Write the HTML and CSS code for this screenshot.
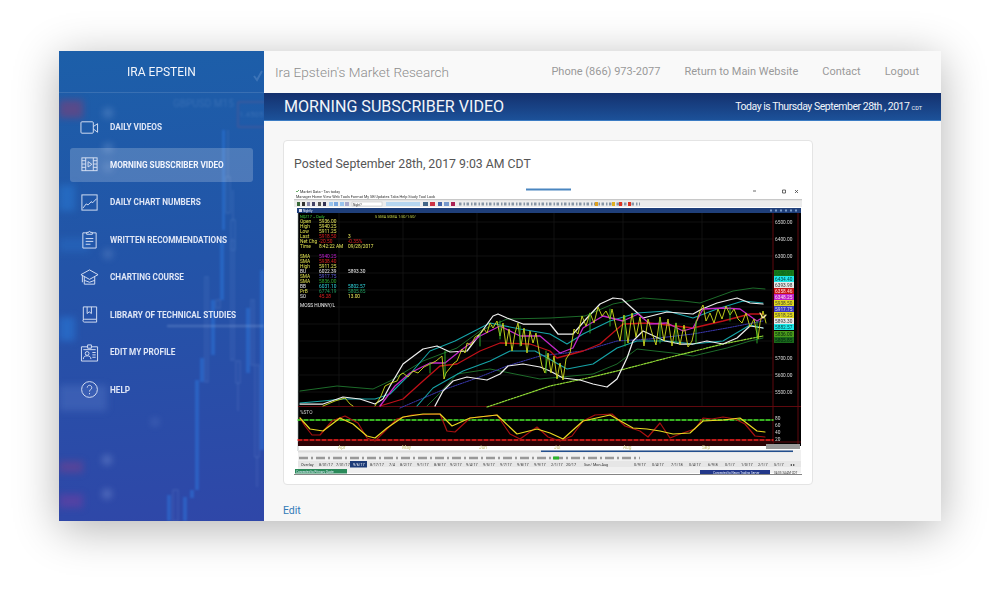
FILE: index.html
```html
<!DOCTYPE html>
<html lang="en">
<head>
<meta charset="utf-8">
<title>Morning Subscriber Video</title>
<link rel="stylesheet" href="styles.css">
</head>
<body>
<div class="window">
  <aside class="sidebar">
    <svg class="side-art" viewBox="59 51 205 470" aria-hidden="true">
      <g class="art-blur">
        <rect x="59" y="100" width="24" height="18" fill="#b0305c" opacity=".4"/>
        <rect x="59" y="461" width="24" height="12" fill="#a03a80" opacity=".35"/>
        <rect x="59" y="494" width="24" height="14" fill="#8a3aa0" opacity=".4"/>
        <rect x="59" y="185" width="16" height="26" fill="#2a7cd8" opacity=".5"/>
        <rect x="59" y="317" width="16" height="24" fill="#2a80e0" opacity=".5"/>
        <rect x="59" y="385" width="48" height="26" fill="#7a9ce0" opacity=".22"/>
        <rect x="59" y="238" width="30" height="14" fill="#2a7cd8" opacity=".3"/>
        <circle cx="108" cy="113" r="5" fill="#9ab8e8" opacity=".3"/>
        <circle cx="108" cy="148" r="5" fill="#9ab8e8" opacity=".3"/>
        <circle cx="108" cy="167" r="5" fill="#9ab8e8" opacity=".25"/>
        <circle cx="108" cy="254" r="5" fill="#9ab8e8" opacity=".25"/>
        <circle cx="107" cy="460" r="5" fill="#a8c0ee" opacity=".3"/>
        <circle cx="107" cy="494" r="5" fill="#a8c0ee" opacity=".3"/>
        <circle cx="155" cy="422" r="4" fill="#a8c0ee" opacity=".18"/>
      </g>
      <text x="173" y="107" class="art-text">GBPUSD M15</text>
      <rect x="238" y="102" width="30" height="25" class="art-box"/>
      <text x="239" y="117" class="art-num">1.4505</text>
      <path d="M254 76l3 4 5-9" class="art-tick"/>
      <g class="art-soft">
        <g fill="#2f7fe6" opacity=".42">
          <rect x="195" y="380" width="4" height="110"/>
          <rect x="200" y="358" width="4" height="24"/>
          <rect x="211" y="300" width="4" height="55"/>
          <rect x="220" y="240" width="4" height="60"/>
          <rect x="222" y="130" width="3" height="100"/>
          <rect x="246" y="308" width="4" height="65"/>
          <rect x="260" y="270" width="4" height="180"/>
          <rect x="167" y="495" width="4" height="26"/>
          <rect x="183" y="497" width="4" height="24"/>
          <rect x="190" y="490" width="4" height="8"/>
        </g>
        <g fill="none" stroke="#8fb2e8" stroke-width="1" opacity=".24">
          <rect x="216" y="300" width="4" height="8"/>
          <rect x="231" y="240" width="3" height="120"/>
          <rect x="236" y="361" width="4" height="22"/>
          <rect x="251" y="300" width="3" height="65"/>
          <rect x="255" y="365" width="4" height="92"/>
          <rect x="205" y="277" width="3" height="105"/>
          <rect x="173" y="490" width="5" height="31"/>
          <rect x="226" y="177" width="4" height="36"/>
          <rect x="231" y="220" width="4" height="30"/>
          <path d="M238 383v28M257 457v30M233 190v30M228 130v47"/>
        </g>
        <path d="M167 326H264" stroke="#a9c3ee" stroke-width="2" opacity=".28"/>
      </g>
    </svg>
    <div class="brand">IRA EPSTEIN</div>
    <nav>
      <ul class="menu">
        <li class="menu-item">
          <a href="#" class="menu-link">
            <svg class="icon" viewBox="0 0 20 20"><rect x="1" y="4" width="13" height="12" rx="1"/><path d="M14 9l4.500-3v9L14 11.500"/></svg>
            <span>Daily Videos</span>
          </a>
        </li>
        <li class="menu-item">
          <a href="#" class="menu-link is-active">
            <svg class="icon" viewBox="0 0 20 20"><rect x="2" y="3" width="16" height="13.500"/><path d="M6 3v13.500M14 3v13.500M2 6h4M2 9.500h4M2 13h4M14 6h4M14 9.500h4M14 13h4M8.500 7l4 2.800-4 2.800z"/></svg>
            <span>Morning Subscriber Video</span>
          </a>
        </li>
        <li class="menu-item">
          <a href="#" class="menu-link">
            <svg class="icon" viewBox="0 0 20 20"><rect x="2" y="2" width="16" height="16"/><path d="M3 16l3.500-4.500 2 1 3.500-3.500 1 1.500L17.500 6"/></svg>
            <span>Daily Chart Numbers</span>
          </a>
        </li>
        <li class="menu-item">
          <a href="#" class="menu-link">
            <svg class="icon" viewBox="0 0 20 20"><path d="M7 3H3v16h14V3h-4M7 4.500V2.500h2a1 1 0 0 1 2 0h2v2zM6 9h8M6 12h8M6 15h5"/></svg>
            <span>Written Recommendations</span>
          </a>
        </li>
        <li class="menu-item">
          <a href="#" class="menu-link">
            <svg class="icon" viewBox="0 0 20 20"><path d="M10 2L1 7l9 5 9-5zM4.500 9v8h11V9M2.500 8v7M4.500 13l5.500 2 5.500-2"/></svg>
            <span>Charting Course</span>
          </a>
        </li>
        <li class="menu-item">
          <a href="#" class="menu-link">
            <svg class="icon" viewBox="0 0 20 20"><path d="M3.500 2h14v13h-13a1.500 1.500 0 0 0-1 2.500 1.500 1.500 0 0 0 1 .5h13v-3M3.500 2v14M7.500 2v7l2.200-1.800L12 9V2"/></svg>
            <span>Library of Technical Studies</span>
          </a>
        </li>
        <li class="menu-item">
          <a href="#" class="menu-link">
            <svg class="icon" viewBox="0 0 20 20"><path d="M8 4H1.500v15h17V4H12M8 5.500V2h4v3.500zM3.500 7h13"/><circle cx="7.500" cy="11" r="2"/><path d="M3.500 17c0-2.500 1.500-3.500 4-3.500s4 1 4 3.500M13 10h3.500M13 12.500h3.500M13 15h3.500"/></svg>
            <span>Edit My Profile</span>
          </a>
        </li>
        <li class="menu-item">
          <a href="#" class="menu-link">
            <svg class="icon" viewBox="0 0 20 20"><circle cx="10" cy="10" r="8.300"/><path d="M7.600 8a2.400 2.400 0 1 1 3.600 2.100c-.9.500-1.200 1-1.200 2M10 13.700v1.300"/></svg>
            <span>Help</span>
          </a>
        </li>
      </ul>
    </nav>
  </aside>

  <div class="main">
    <header class="topbar">
      <div class="site-title">Ira Epstein's Market Research</div>
      <div class="top-links">
        <a href="#">Phone (866) 973-2077</a>
        <a href="#">Return to Main Website</a>
        <a href="#">Contact</a>
        <a href="#">Logout</a>
      </div>
    </header>
    <div class="pagebar">
      <h1>MORNING SUBSCRIBER VIDEO</h1>
      <div class="today">Today is Thursday September 28th , 2017 <small>CDT</small></div>
    </div>
    <section class="content">
      <article class="card">
        <h2>Posted September 28th, 2017 9:03 AM CDT</h2>
        <svg class="chart" viewBox="294 182 508 292" role="img" aria-label="Chart screenshot">
          <rect x="294" y="182" width="508" height="292" fill="#fff"/>
          <rect x="526" y="187.500" width="45" height="2" fill="#4a86c0"/>
          <path d="M296 190l1 1 2-2" stroke="#2a8a2a" fill="none" stroke-width=".7"/>
          <text x="300" y="191.500" class="t4 dk">Market Data - Tan today</text>
          <text x="296" y="197" class="t4 dk">Manager  Home  View  Web  Tools  Format  My SB Updates  Tabs  Help  Study  Tool  Look</text>
          <path d="M753 190h3M782.500 189h3v3h-3zM795 192l3-3M795 189l3 3" stroke="#444" stroke-width=".8" fill="none"/>
          <rect x="294" y="198" width="508" height="1.500" fill="#c8c8c8"/>
          <rect x="294" y="200" width="508" height="6" fill="#ececec"/>
          <g class="tools">
            <rect x="297" y="201" width="3" height="4" fill="#3a6a3a"/><rect x="302" y="201" width="3" height="4" fill="#333"/><rect x="307" y="201" width="3" height="4" fill="#88a"/><rect x="312" y="201" width="3" height="4" fill="#446"/><rect x="318" y="201" width="3" height="4" fill="#555"/><rect x="323" y="201" width="3" height="4" fill="#335"/>
            <rect x="329" y="201" width="4" height="4" fill="#9ac4ee"/><rect x="334" y="201" width="4" height="4" fill="#7aa8e0"/><rect x="340" y="201" width="4" height="4" fill="#9ac4ee"/><rect x="345" y="201" width="4" height="4" fill="#aac"/>
            <rect x="352" y="201" width="30" height="4" fill="#fff" stroke="#aaa" stroke-width=".4"/>
            <text x="353" y="204.500" class="t3 dk">Night?</text>
            <rect x="386" y="201" width="34" height="4" fill="#b6d6f0"/><rect x="423" y="201" width="5" height="4" fill="#446688"/><rect x="430" y="201" width="5" height="4" fill="#cc3344"/><rect x="438" y="201" width="4" height="4" fill="#4466aa"/><rect x="444" y="201" width="5" height="4" fill="#7799cc"/><rect x="451" y="201" width="4" height="4" fill="#aa2255"/>
            <path d="M459 203H640" stroke="#8796a6" stroke-width="3" stroke-dasharray="2.500 2 1.500 1.500"/>
            <rect x="612" y="201" width="3" height="4" fill="#e0b020"/><rect x="595" y="201" width="3" height="4" fill="#dda020"/><rect x="619" y="201" width="3" height="4" fill="#dd3322"/><rect x="628" y="201" width="3" height="4" fill="#dd3322"/>
          </g>
          <rect x="297" y="207" width="504" height="5" fill="#1f3f7a"/>
          <rect x="299" y="208" width="3" height="3" fill="#dde"/>
          <text x="303" y="211" class="t3 lt">Nightly</text>
          <path d="M770 209.500h28" stroke="#7a9ac8" stroke-width="1.800" stroke-dasharray="2 3"/>
          <rect x="298" y="212" width="503" height="233" fill="#000"/>
          <path d="M298 212v238" stroke="#9aa" stroke-width=".6"/>
          <g stroke="#1c1c1c" stroke-width=".6" fill="none">
            <path d="M339 212v193M403 212v193M477 212v193M554 212v193M623 212v193M702 212v193M298 221h475M298 238h475M298 255h475M298 272h475M298 289h475M298 306h475M298 323h475M298 340h475M298 357h475M298 374h475M298 391h475"/>
          </g>
          <path d="M773 212v233M798 212v233M298 405.500h503M298 441h503" stroke="#6a0a10" stroke-width=".9"/>
          <rect x="298" y="441" width="475" height="4" fill="#2b0205"/>
          <rect x="766" y="443" width="34" height="5" fill="#999"/>

          <g class="legend">
            <text x="300" y="217" class="t4" fill="#3fd43f">NQZ17 ~ Daily</text>
            <text x="375" y="217" class="t4" fill="#c8d84a">5 SMA 50MA 1:50/1:50/</text>
            <text x="300" y="222" class="t5" fill="#dfe04f">Open</text><text x="319" y="222" class="t5" fill="#e8e85a">5936.00</text>
            <text x="300" y="227" class="t5" fill="#dfe04f">High</text><text x="319" y="227" class="t5" fill="#e8e85a">5940.25</text>
            <text x="300" y="232" class="t5" fill="#dfe04f">Low</text><text x="319" y="232" class="t5" fill="#e8e85a">5911.25</text>
            <text x="300" y="237" class="t5" fill="#dfe04f">Last</text><text x="319" y="237" class="t5" fill="#e02020">5918.50</text><text x="348" y="237" class="t5" fill="#e8e85a">3</text>
            <text x="300" y="242" class="t5" fill="#dfe04f">Net Chg</text><text x="319" y="242" class="t5" fill="#e02020">-20.50</text><text x="348" y="242" class="t5" fill="#e02020">-0.35%</text>
            <text x="300" y="247" class="t5" fill="#dfe04f">Time</text><text x="319" y="247" class="t5" fill="#e8e85a">8:42:22 AM</text><text x="348" y="247" class="t5" fill="#e8e85a">09/28/2017</text>
            <text x="300" y="257" class="t5" fill="#dfe04f">SMA</text><text x="319" y="257" class="t5" fill="#c020d0">5940.25</text>
            <text x="300" y="262" class="t5" fill="#dfe04f">SMA</text><text x="319" y="262" class="t5" fill="#e02020">5938.40</text>
            <text x="300" y="267" class="t5" fill="#dfe04f">High</text><text x="319" y="267" class="t5" fill="#e8e85a">5911.25</text>
            <text x="300" y="272" class="t5" fill="#eee">BU</text><text x="319" y="272" class="t5" fill="#eee">6022.39</text><text x="348" y="272" class="t5" fill="#eee">5893.30</text>
            <text x="300" y="277" class="t5" fill="#dfe04f">SMA</text><text x="319" y="277" class="t5" fill="#6060e0">5917.75</text>
            <text x="300" y="282" class="t5" fill="#dfe04f">SMA</text><text x="319" y="282" class="t5" fill="#2faa2f">5836.00</text>
            <text x="300" y="287" class="t5" fill="#eee">BB</text><text x="319" y="287" class="t5" fill="#2fd8e0">6031.10</text><text x="348" y="287" class="t5" fill="#2fd8e0">5802.57</text>
            <text x="300" y="292" class="t5" fill="#dfe04f">PrB</text><text x="319" y="292" class="t5" fill="#20a060">6774.19</text><text x="348" y="292" class="t5" fill="#20a060">5805.85</text>
            <text x="300" y="297" class="t5" fill="#eee">SO</text><text x="319" y="297" class="t5" fill="#e02020">45.28</text><text x="348" y="297" class="t5" fill="#e8e85a">13.00</text>
            <text x="300" y="306" class="t5" fill="#eee">MOSS HUNNY/L</text>
          </g>

          <g fill="none" stroke-linejoin="round" stroke-linecap="round">
            <path d="M300 390L337 385 373 388 390 380 423 360 457 347 480 330 507 318 550 317 585 315 613 303 643 297 683 300 700 302 733 290 753 287 765 288" stroke="#1d6b2a" stroke-width="1"/>
            <path d="M427 405L437 395 457 373 490 368 540 378 593 373 617 363 637 348 673 352 693 355 727 347 750 340 763 337" stroke="#1d6b2a" stroke-width="1"/>
            <path d="M487 406L550 385 583 378 617 370 667 357 723 343 763 335" stroke="#8ed834" stroke-width="1.200" stroke-dasharray="2 1.200"/>
            <path d="M400 407L440 390 477 377 507 365 540 355 583 350 617 340 650 338 693 333 727 327 763 320" stroke="#3a38b0" stroke-width="1" stroke-dasharray="1.500 1"/>
            <path d="M380 405L403 398 423 380 440 365 457 363 480 350 500 342 530 343 550 350 557 357 583 350 600 343 623 323 650 322 693 327 723 320 750 313 763 313" stroke="#c01018" stroke-width="1.300"/>
            <path d="M417 405L433 387 463 370 490 360 510 350 535 350 567 368 593 363 617 347 637 340 667 340 693 343 723 340 750 324 763 327" stroke="#16a4a8" stroke-width="1.100"/>
            <path d="M300 402L323 400 343 398 375 398 390 393 410 373 430 350 455 340 490 322 520 328 550 333 567 343 583 333 610 320 637 312 667 310 693 317 717 308 743 300 763 302" stroke="#16a4a8" stroke-width="1.100"/>
            <path d="M300 403L323 403 343 396 360 398 375 403M375 403L383 398 390 385 403 363 423 348 437 345 450 351 467 350 480 333 493 315 498 313 507 317 523 323 550 323 558 333 573 333 587 317 600 303 613 297 622 298 633 308 643 317 667 311 693 313 702 308 717 302 737 297 750 302 763 303" stroke="#eee" stroke-width="1.250"/>
            <path d="M435 405L443 390 453 380 467 376 487 379 500 373 508 365 523 363 540 366 550 370 563 377 580 379 593 383 607 386 617 378 627 357 633 340 643 330 665 340 680 343 693 343 707 340 723 343 737 337 750 325 763 327" stroke="#eee" stroke-width="1.250"/>
            <path d="M380 405L395 385 410 372 430 362 445 362 460 350 480 335 500 325 520 335 540 335 560 352 573 347 583 327 603 315 623 320 638 313 650 323 667 322 683 330 693 327 703 308 723 307 740 308 757 320 765 315" stroke="#c428c8" stroke-width="1.300"/>
            <path d="M323 405L335 400 345 397 350 403 353 405M375 405L381 395 385 385 391 382 397 380 400 374 403 372 408 376 413 370 418 372 424 366 430 363 436 360 442 355 444 378 446 372 450 367 454 362 457 360 462 348 465 352 467 342 471 344 475 336 480 333 484 328 487 332 490 322 493 327 497 320 500 335 503 322 506 345 509 328 512 350 515 332 518 322 521 345 524 327 527 352 530 330 533 342 536 332 539 350 542 365 545 372 548 352 551 372 554 355 557 378 560 362 563 379 566 358 570 352 574 328 578 333 582 315 586 325 590 312 594 322 598 306 602 315 606 310 610 318 612 308 616 326 620 340 624 314 628 342 632 312 636 336 640 316 644 345 648 318 652 332 656 344 660 316 664 340 668 318 672 345 676 322 680 344 684 324 688 346 692 340 696 322 700 310 703 304 706 320 710 312 714 322 718 308 722 318 726 305 730 314 734 308 738 318 742 322 746 312 750 326 754 318 758 338 760 322 763 310 766 322" stroke="#cfdc1e" stroke-width=".9"/>
            <path d="M445 350V375M500 320V338M520 325V345M546 350V372M590 312V332M625 315V345M660 318V342M696 320V342M757 320V342M430 362V372M480 332V345M610 308V325M676 322V342M730 306V320" stroke="#2bb52b" stroke-width=".9"/>
            <path d="M760 312l3 5 3-3" stroke="#f6f6a0" stroke-width="1.200"/>
            <path d="M298 419H773" stroke="#4cf02e" stroke-width="1.500" stroke-dasharray="4 2"/>
            <path d="M298 439H773" stroke="#ff2020" stroke-width="1.500" stroke-dasharray="4 2"/>
            <path d="M300 417L305 425 312 434 320 434 332 420 345 415 358 422 367 437 375 440 385 430 397 418 412 414 440 413 447 430 455 431 470 417 497 414 510 433 520 438 537 426 548 436 560 440 572 435 583 420 595 414 612 413 625 425 640 430 648 436 660 422 670 437 680 433 695 428 703 417 712 418 723 416 735 418 745 423 755 435 765 436" stroke="#a81010" stroke-width="1.200"/>
            <path d="M300 417L310 428 323 430 340 417 353 423 367 435 375 437 387 427 403 416 423 413 440 413 452 425 470 417 497 414 517 433 537 428 550 432 563 438 583 420 610 414 633 427 647 428 660 430 673 433 690 432 703 420 723 419 740 417 757 430 765 431" stroke="#e8d820" stroke-width="1.200"/>
          </g>
          <text x="300" y="413" class="t5" fill="#cfcfcf">%STO</text>

          <g class="t5 axis">
            <text x="775" y="223">6500.00</text><text x="775" y="240">6400.00</text><text x="775" y="257">6300.00</text>
            <text x="775" y="359">5700.00</text><text x="775" y="376">5600.00</text><text x="775" y="393">5500.00</text>
            <text x="775" y="419">80</text><text x="775" y="426">60</text><text x="775" y="433">40</text><text x="775" y="440">20</text>
          </g>
          <g class="t5 tags">
            <rect x="774" y="269" width="20" height="6" fill="#1a7a1a"/><text x="775" y="274" fill="#062">6530.91</text>
            <rect x="774" y="275" width="20" height="6" fill="#1fe8e8"/><text x="775" y="280" fill="#044">6434.40</text>
            <rect x="774" y="281" width="20" height="6" fill="#e8e8e8"/><text x="775" y="286" fill="#333">6393.98</text>
            <rect x="774" y="287" width="20" height="6" fill="#c81414"/><text x="775" y="292" fill="#fdd">6358.46</text>
            <rect x="774" y="293" width="20" height="6" fill="#c020c8"/><text x="775" y="298" fill="#fde">6348.25</text>
            <rect x="774" y="299" width="20" height="6" fill="#e0d820"/><text x="775" y="304" fill="#443">5938.50</text>
            <rect x="774" y="305" width="20" height="6" fill="#3a38c0"/><text x="775" y="310" fill="#dde">5917.75</text>
            <rect x="774" y="311" width="20" height="6" fill="#e0d820"/><text x="775" y="316" fill="#443">5918.25</text>
            <rect x="774" y="317" width="20" height="6" fill="#e8e8e8"/><text x="775" y="322" fill="#333">5893.30</text>
            <rect x="774" y="323" width="20" height="6" fill="#1fe8e8"/><text x="775" y="328" fill="#044">5882.57</text>
            <rect x="774" y="330" width="20" height="6" fill="#4a9a1a"/><text x="775" y="335" fill="#021">5836.00</text>
            <rect x="774" y="336" width="20" height="6" fill="#1a6a1a"/><text x="775" y="341" fill="#021">5805.85</text>
          </g>
          <g class="t5 months" fill="#c9c27a">
            <text x="338" y="448">Apr</text><text x="402" y="448">May</text><text x="479" y="448">Jun</text><text x="554" y="448">Jul</text><text x="623" y="448">Aug</text><text x="702" y="448">Sep</text>
          </g>

          <rect x="298" y="449" width="503" height="23" fill="#f0f0f0"/>
          <rect x="298" y="449.500" width="495" height="2" fill="#ddd"/>
          <rect x="541" y="449.500" width="252" height="1.500" fill="#234f8e"/>
          <path d="M299 457H640" stroke="#999" stroke-width="2.500" stroke-dasharray="9 3 2 3"/>
          <rect x="553" y="455.500" width="6" height="3" fill="#2bb52b"/>
          <g class="t4 dk tabs">
            <rect x="298" y="460" width="503" height="6" fill="#e6e6e6"/>
            <rect x="350" y="460" width="17" height="6.500" fill="#1e3c78"/>
            <text x="301" y="465">Overlay</text><text x="319" y="465">8/31/17</text><text x="336" y="465">7/31/17</text><text x="353" y="465" class="lt-tab">9/6/17</text><text x="370" y="465">8/17/17</text><text x="389" y="465">7/4</text><text x="400" y="465">8/2/17</text><text x="417" y="465">9/1/17</text><text x="434" y="465">8/8/17</text><text x="450" y="465">9/2/17</text><text x="466" y="465">9/4/17</text><text x="483" y="465">9/5/17</text><text x="500" y="465">9/7/17</text><text x="517" y="465">9/8/17</text><text x="534" y="465">9/9/17</text><text x="551" y="465">2/1/17</text><text x="566" y="465">20/17</text><text x="584" y="465">Sun/ Mon Aug</text><text x="634" y="465">0/9/17</text><text x="652" y="465">0/4/17</text><text x="671" y="465">7/1/18</text><text x="689" y="465">0/4/17</text><text x="708" y="465">6/9/8</text><text x="725" y="465">0/1/7</text><text x="741" y="465">1/0/17</text><text x="758" y="465">2/1/7</text><text x="774" y="465">5/1/7</text><text x="790" y="465">◂ ▸</text>
          </g>
          <rect x="295" y="468" width="52" height="4.500" fill="#2a8a5a"/>
          <text x="296" y="471.800" class="t3 lt">Connected to Primary Quote</text>
          <rect x="700" y="469" width="70" height="4" fill="#23388a"/>
          <text x="713" y="472.500" class="t3 lt">Connected to Nearn Trading Server</text>
          <text x="774" y="472.500" class="t3 dk">04:03:34 AM CDT</text>
          <path d="M294 473.500H802" stroke="#666" stroke-width=".8"/>
        </svg>
      </article>
      <a href="#" class="edit">Edit</a>
    </section>
  </div>
</div>
</body>
</html>
```

FILE: styles.css
```css
* { box-sizing: border-box; }
html, body { height: 100%; }
body {
  margin: 0;
  height: 589px;
  overflow: hidden;
  background: #fff;
  font-family: Roboto, "Liberation Sans", sans-serif;
  padding: 51px 59px 68px;
}
a { text-decoration: none; color: inherit; }
.window {
  display: flex;
  height: 470px;
  box-shadow: 0 8px 42px rgba(0, 0, 0, .3);
  background: #f7f7f7;
}
.sidebar {
  position: relative;
  flex: 0 0 205px;
  overflow: hidden;
  color: #fff;
  background: linear-gradient(175deg, #1c5fa9 0%, #2354a8 45%, #2f47a8 100%);
}
.side-art {
  position: absolute;
  left: 0;
  top: 0;
  width: 205px;
  height: 470px;
}
.art-blur { filter: blur(3.500px); }
.art-soft { filter: blur(1px); }
.art-text {
  font-size: 10px;
  fill: #8fb0de;
  opacity: .2;
  filter: blur(.9px);
}
.art-num {
  font-size: 8px;
  fill: #8fb0de;
  opacity: .22;
  filter: blur(.8px);
}
.art-box { fill: none; stroke: #c0506a; opacity: .3; filter: blur(.8px); }
.art-tick { fill: none; stroke: #9abce8; stroke-width: 2; opacity: .25; }
.brand {
  position: relative;
  height: 42px;
  border-bottom: 1px solid rgba(255, 255, 255, .12);
  text-align: center;
  line-height: 42px;
  font-size: 12px;
  color: #f2f5fb;
}
.menu {
  position: relative;
  list-style: none;
  margin: 0;
  padding: 17px 11px 0;
}
.menu-link {
  display: flex;
  align-items: center;
  gap: 11px;
  height: 34px;
  margin-bottom: 3.500px;
  padding-left: 10px;
  border-radius: 3px;
  font-size: 8.200px;
  font-weight: 700;
  text-transform: uppercase;
  color: #dfe6f6;
}
.menu-link.is-active {
  background: rgba(255, 255, 255, .2);
  color: #f2f5fd;
}
.icon {
  flex: 0 0 19px;
  width: 19px;
  height: 19px;
  fill: none;
  stroke: #d8e2f4;
  stroke-width: 1;
}
.main {
  flex: 1;
  min-width: 0;
  display: flex;
  flex-direction: column;
}
.topbar {
  flex: 0 0 42px;
  display: flex;
  align-items: center;
  justify-content: space-between;
  padding: 0 22px 1px 11px;
  background: #f9f9f9;
  color: #999;
}
.site-title { font-size: 13.550px; font-weight: 300; color: #8d8d8d; }
.top-links { display: flex; gap: 24px; font-size: 11px; }
.pagebar {
  flex: 0 0 28px;
  display: flex;
  align-items: center;
  justify-content: space-between;
  padding: 0 19px 0 20px;
  background: linear-gradient(#14316e, #1c5199);
  border-bottom: 1px solid #3c7cc4;
  color: #f2f5fa;
}
.pagebar h1 { margin: 0; font-size: 16.100px; font-weight: 400; }
.today { font-size: 10.500px; letter-spacing: -.045em; }
.today small { font-size: 5.500px; letter-spacing: 0; }
.content {
  flex: 1;
  padding: 19px 19px 0;
  background: #f7f7f7;
  overflow: hidden;
}
.card {
  width: 530px;
  height: 345px;
  padding: 15px 10px 0;
  background: #fff;
  border: 1px solid #e4e4e4;
  border-radius: 4px;
}
.card h2 {
  margin: 0 0 11px;
  font-size: 12.300px;
  line-height: 16px;
  font-weight: 400;
  color: #555;
}
.chart { display: block; width: 508px; height: 292px; filter: blur(.4px); }
.t3 { font-size: 3px; }
.t4, .t4 text { font-size: 3.800px; }
.t5, .t5 text { font-size: 4.800px; }
.dk { fill: #333; }
.lt { fill: #e8eeff; }
.lt-tab { fill: #fff; }
.axis { fill: #d8d8d8; }
.edit {
  display: block;
  margin-top: 19px;
  font-size: 10.500px;
  color: #337ab7;
}
```
